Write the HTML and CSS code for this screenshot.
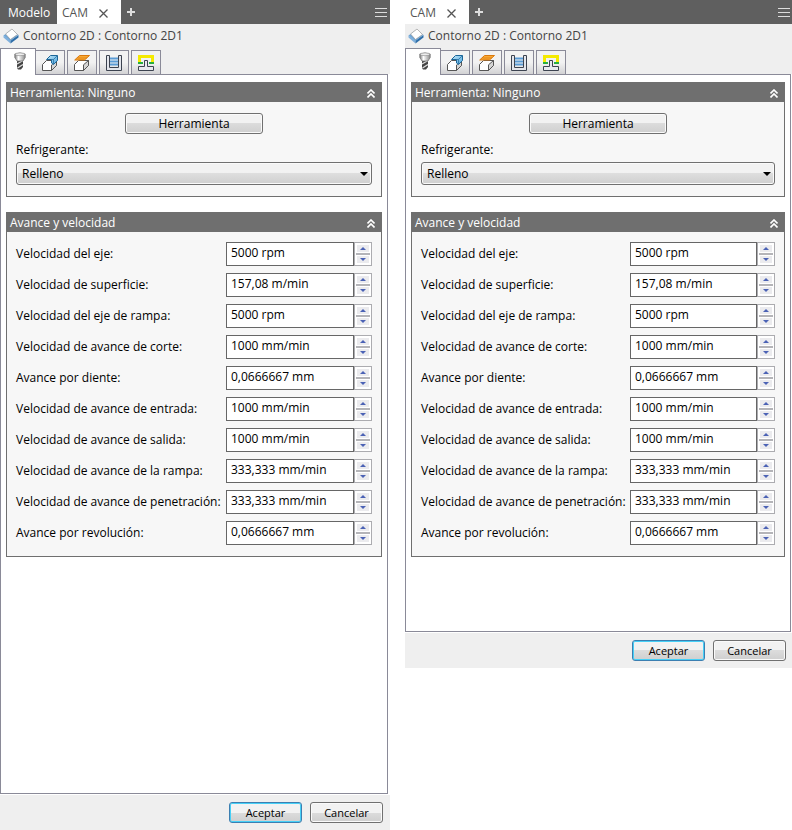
FILE: index.html
```
<!DOCTYPE html>
<html lang="es">
<head>
  <meta charset="UTF-8">
  <title>Contorno 2D</title>
  <link rel="stylesheet" href="styles.css">
</head>
<body>
  <svg width="0" height="0" class="sprites" aria-hidden="true">
    <defs>
      <linearGradient id="metal" x1="0" x2="1" y1="0" y2="0">
        <stop offset="0" stop-color="#777"/>
        <stop offset="0.35" stop-color="#fff"/>
        <stop offset="1" stop-color="#888"/>
      </linearGradient>
      <linearGradient id="azul" x1="0" x2="1" y1="0" y2="1">
        <stop offset="0" stop-color="#c4e8f8"/>
        <stop offset="1" stop-color="#4aa3dc"/>
      </linearGradient>
    </defs>
    <symbol id="i-contorno" viewBox="0 0 16 16">
      <path d="M0.5 7.5L7.5 12.5V15.5L0.5 9.5Z" fill="#7fb0dc"/>
      <path d="M15.5 7L7.5 12.5V15.5L15.5 9.5Z" fill="#2f6ea8"/>
      <path d="M0.5 7.5L8 2L15.5 7L7.5 13Z" fill="#6ea6d8"/>
      <path d="M2.5 6L9 1L14.5 6.5L7.5 11.5Z" fill="#fff" stroke="#999" stroke-width="0.7"/>
    </symbol>
    <symbol id="i-herramienta" viewBox="0 0 16 18">
      <path d="M5 8H11V15L9 17.5H6L5 16Z" fill="#444"/>
      <path d="M5 12L11 8.5M5.5 16L11 12.5" stroke="#ddd" stroke-width="1.4"/>
      <path d="M2.8 2Q8 0 13.2 2V5.5L11 9H5L2.8 5.5Z" fill="url(#metal)" stroke="#777" stroke-width="0.8"/>
      <ellipse cx="8" cy="2.3" rx="4.6" ry="1.4" fill="#eee" stroke="#888" stroke-width="0.6"/>
    </symbol>
    <symbol id="i-geometria" viewBox="0 0 16 16">
      <path d="M0.5 9.5L4.5 5.5H14.5V10.5L9.5 15.5H0.5Z" fill="#fff" stroke="#555" stroke-linejoin="round"/>
      <path d="M9.5 10V15.5L14.5 10.5V5.5Z" fill="#d5d5d5" stroke="#555" stroke-linejoin="round"/>
      <path d="M4.5 4.5L8.5 0.5H15.5V5.5L11.5 9.5L9.5 8V4.5Z" fill="url(#azul)" stroke="#1c6698" stroke-linejoin="round"/>
      <path d="M9.5 4.5H11.5L15.2 0.8M11.5 4.5V9" fill="none" stroke="#1c6698" stroke-width="0.7"/>
    </symbol>
    <symbol id="i-alturas" viewBox="0 0 16 16">
      <path d="M0.5 9.5L4.5 5.5H14.5V10.5L9.5 15.5H0.5Z" fill="#fff" stroke="#555" stroke-linejoin="round"/>
      <path d="M9.5 9.8V15.5L14.5 10.5V5.5Z" fill="#d5d5d5" stroke="#555" stroke-linejoin="round"/>
      <path d="M0.7 5L5.5 0.5H15.5L10.5 5Z" fill="#f9a832" stroke="#d9780e" stroke-linejoin="round"/>
      <path d="M3.5 3H13" stroke="#d9780e" stroke-width="0.7"/>
    </symbol>
    <symbol id="i-pasadas" viewBox="0 0 16 16">
      <path d="M4 3.5H12M4 6.5H12M4 9.5H12" stroke="#5a9bd5" stroke-width="2"/>
      <path d="M0.5 0.5H3.5V12.5H12.5V0.5H15.5V15.5H0.5Z" fill="#e4e6ec" stroke="#3c4350"/>
    </symbol>
    <symbol id="i-vinculacion" viewBox="0 0 16 16">
      <path d="M0 8H5M11 8H16" stroke="#27ae3f" stroke-width="2"/>
      <path d="M1.5 7V1.5H14.5V7" fill="none" stroke="#f5ea00" stroke-width="3"/>
      <path d="M6.500 5.500H9.500V11.500H15.500V15.500H0.500V11.500H6.500Z" fill="#e8e9ee" stroke="#3c4350"/>
    </symbol>
    <symbol id="i-plegar" viewBox="0 0 8 9">
      <path d="M0.500 4.500L4 1L7.500 4.500M0.500 8.500L4 5L7.500 8.500" fill="none" stroke="#fff" stroke-width="1.600"/>
    </symbol>
    <symbol id="i-cerrar" viewBox="0 0 9 9">
      <path d="M0.500 0.500L8.500 8.500M8.500 0.500L0.500 8.500" stroke="#555" stroke-width="1.300"/>
    </symbol>
    <symbol id="i-mas" viewBox="0 0 8 8">
      <path d="M4 0V8M0 4H8" stroke="#ddd" stroke-width="2"/>
    </symbol>
    <symbol id="i-menu" viewBox="0 0 12 9">
      <path d="M0 0.500H12M0 4.500H12M0 8.500H12" stroke="#ddd"/>
    </symbol>
  </svg>

  <main class="paneles">
    <section class="panel panel-alto">
      <div class="barra">
        <button class="pestana">Modelo</button>
        <div class="pestana activa">CAM
          <button class="icono" aria-label="Cerrar"><svg width="9" height="9"><use href="#i-cerrar"/></svg></button>
        </div>
        <button class="icono mas" aria-label="Añadir"><svg width="8" height="8"><use href="#i-mas"/></svg></button>
        <button class="icono menu" aria-label="Menú"><svg width="12" height="9"><use href="#i-menu"/></svg></button>
      </div>
      <h1 class="titulo"><svg width="16" height="16"><use href="#i-contorno"/></svg>Contorno 2D : Contorno 2D1</h1>
      <nav class="fichas">
        <button class="ficha actual" aria-label="Herramienta"><svg width="16" height="18"><use href="#i-herramienta"/></svg></button>
        <button class="ficha" aria-label="Geometría"><svg width="16" height="16"><use href="#i-geometria"/></svg></button>
        <button class="ficha" aria-label="Alturas"><svg width="16" height="16"><use href="#i-alturas"/></svg></button>
        <button class="ficha" aria-label="Pasadas"><svg width="16" height="16"><use href="#i-pasadas"/></svg></button>
        <button class="ficha" aria-label="Vinculación"><svg width="16" height="16"><use href="#i-vinculacion"/></svg></button>
      </nav>
      <div class="pagina">
        <section class="grupo">
          <h2>Herramienta: Ninguno <button class="icono" aria-label="Plegar"><svg width="8" height="9"><use href="#i-plegar"/></svg></button></h2>
          <div class="cuerpo">
            <button class="boton elegir">Herramienta</button>
            <label class="refrigerante" for="refrigerante1">Refrigerante:</label>
            <div class="lista"><select id="refrigerante1"><option>Relleno</option></select></div>
          </div>
        </section>
        <section class="grupo">
          <h2>Avance y velocidad <button class="icono" aria-label="Plegar"><svg width="8" height="9"><use href="#i-plegar"/></svg></button></h2>
          <div class="cuerpo campos"></div>
        </section>
      </div>
      <footer class="pie">
        <button class="boton aceptar">Aceptar</button>
        <button class="boton">Cancelar</button>
      </footer>
    </section>

    <section class="panel">
      <div class="barra">
        <div class="pestana activa">CAM
          <button class="icono" aria-label="Cerrar"><svg width="9" height="9"><use href="#i-cerrar"/></svg></button>
        </div>
        <button class="icono mas" aria-label="Añadir"><svg width="8" height="8"><use href="#i-mas"/></svg></button>
        <button class="icono menu" aria-label="Menú"><svg width="12" height="9"><use href="#i-menu"/></svg></button>
      </div>
      <h1 class="titulo"><svg width="16" height="16"><use href="#i-contorno"/></svg>Contorno 2D : Contorno 2D1</h1>
      <nav class="fichas">
        <button class="ficha actual" aria-label="Herramienta"><svg width="16" height="18"><use href="#i-herramienta"/></svg></button>
        <button class="ficha" aria-label="Geometría"><svg width="16" height="16"><use href="#i-geometria"/></svg></button>
        <button class="ficha" aria-label="Alturas"><svg width="16" height="16"><use href="#i-alturas"/></svg></button>
        <button class="ficha" aria-label="Pasadas"><svg width="16" height="16"><use href="#i-pasadas"/></svg></button>
        <button class="ficha" aria-label="Vinculación"><svg width="16" height="16"><use href="#i-vinculacion"/></svg></button>
      </nav>
      <div class="pagina">
        <section class="grupo">
          <h2>Herramienta: Ninguno <button class="icono" aria-label="Plegar"><svg width="8" height="9"><use href="#i-plegar"/></svg></button></h2>
          <div class="cuerpo">
            <button class="boton elegir">Herramienta</button>
            <label class="refrigerante" for="refrigerante2">Refrigerante:</label>
            <div class="lista"><select id="refrigerante2"><option>Relleno</option></select></div>
          </div>
        </section>
        <section class="grupo">
          <h2>Avance y velocidad <button class="icono" aria-label="Plegar"><svg width="8" height="9"><use href="#i-plegar"/></svg></button></h2>
          <div class="cuerpo campos"></div>
        </section>
      </div>
      <footer class="pie">
        <button class="boton aceptar">Aceptar</button>
        <button class="boton">Cancelar</button>
      </footer>
    </section>
  </main>

  <script src="script.js"></script>
</body>
</html>
```
FILE: styles.css
```
* {
  box-sizing: border-box;
}
body {
  margin: 0;
  background: #fff;
  color: #000;
  font-family: "Open Sans", Tahoma, sans-serif;
  font-size: 12px;
  line-height: 16px;
}
button, input, select {
  font: inherit;
  color: inherit;
  margin: 0;
}
svg {
  display: block;
}
h1, h2 {
  margin: 0;
  font-size: 12px;
  font-weight: normal;
}
.sprites {
  position: absolute;
}
.paneles {
  display: grid;
  grid-template-columns: 390fr 387fr;
  gap: 15px;
  align-items: start;
}
.panel {
  display: flex;
  flex-direction: column;
  background: linear-gradient(#efefef, #efefef) top / 100% 74px no-repeat;
}
.panel-alto {
  min-height: 100vh;
}
.icono {
  padding: 0;
  border: none;
  background: none;
}

/* barra superior */
.barra {
  display: flex;
  align-items: center;
  height: 24px;
  padding-right: 3px;
  background: #5f5f5f;
}
.panel:last-child .barra {
  padding-right: 2px;
}
.pestana {
  width: 57px;
  height: 24px;
  padding: 2px 0 0 8px;
  border: none;
  background: none;
  color: #fff;
  text-align: left;
}
.pestana.activa {
  display: flex;
  align-items: center;
  justify-content: space-between;
  width: 64px;
  padding: 2px 13px 0 5px;
  background: #fff;
  color: #555;
}
.mas {
  margin-left: 6px;
}
.menu {
  margin-left: auto;
}

.titulo {
  display: flex;
  align-items: center;
  gap: 4px;
  height: 24px;
  padding-left: 3px;
  color: #444;
}

/* fichas de la operación */
.fichas {
  display: flex;
  align-items: flex-end;
  gap: 2px;
  height: 27px;
  margin-bottom: -1px;
  position: relative;
}
.ficha {
  display: flex;
  align-items: center;
  justify-content: center;
  width: 30px;
  height: 25px;
  padding: 0;
  border: 1px solid #8a8a98;
  background: linear-gradient(#f2f2f2 50%, #d2d2d4);
}
.ficha.actual {
  width: 36px;
  height: 27px;
  margin-right: -3px;
  padding-left: 4px;
  padding-bottom: 2px;
  border-bottom: none;
  background: #fff;
  z-index: 1;
}

.pagina {
  flex: 1;
  margin: 0 2px 0 0;
  padding: 7px 5px 74px;
  border: 1px solid #8a8a98;
  background: #fff;
}
.panel:last-child .pagina {
  margin-right: 1px;
}
.grupo {
  margin-bottom: 15px;
}
.grupo:last-child {
  margin-bottom: 0;
}
.grupo h2 {
  display: flex;
  align-items: center;
  justify-content: space-between;
  height: 20px;
  padding: 2px 7px 0 4px;
  background: #6f6f6f;
  color: #fff;
}
.cuerpo {
  padding: 11px 9px;
  border: 1px solid #6f6f6f;
  border-top: none;
  background: #f7f7f7;
}

.boton {
  width: 73px;
  height: 21px;
  padding: 0;
  border: 1px solid #707070;
  border-radius: 3px;
  background: linear-gradient(#f2f2f2 50%, #dcdcdc 50%, #cfcfcf);
  box-shadow: inset 0 0 0 1px #fafafa;
  font-size: 11px;
}
.aceptar {
  border-color: #3c7fb1;
  box-shadow: inset 0 0 0 1px #46d0f7;
}
.elegir {
  display: block;
  width: 138px;
  margin: 0 auto;
  font-size: 12px;
}
.refrigerante {
  display: block;
  margin: 8px 0 4px;
}
.lista {
  position: relative;
}
.lista select {
  display: block;
  appearance: none;
  width: 100%;
  height: 23px;
  padding: 0 5px;
  border: 1px solid #707070;
  border-radius: 3px;
  background: linear-gradient(#f2f2f2 45%, #dedede 50%, #cfcfcf);
  box-shadow: inset 0 0 0 1px #fafafa;
}
.lista::after {
  content: "";
  position: absolute;
  top: 10px;
  right: 4px;
  border: 4px solid transparent;
  border-top-color: #000;
  border-bottom: none;
}

/* filas de avance y velocidad */
.campos {
  display: grid;
  gap: 7px;
  padding-top: 10px;
}
.campo {
  display: grid;
  grid-template-columns: 1fr 146px;
  align-items: center;
  white-space: nowrap;
}
.panel:last-child .campo {
  grid-template-columns: 1fr 145px;
}
.valor {
  display: flex;
}
.valor input {
  flex: 1;
  min-width: 0;
  height: 24px;
  padding: 0 4px 4px;
  border: 1px solid #666;
  border-radius: 0;
  background: #fff;
}
.giro {
  display: grid;
  gap: 2px;
  width: 18px;
  padding: 1px;
  border: 1px solid #acacb0;
  background: #b4b4b8;
  box-shadow: inset 0 0 0 1px #fff;
}
.giro button {
  display: flex;
  align-items: center;
  justify-content: center;
  padding: 0;
  border: 1px solid #fff;
  background: #ebebee;
}
.giro button::before {
  content: "";
  border: 3px solid transparent;
  border-top: none;
  border-bottom-color: #4b62b5;
}
.giro .bajar::before {
  border-top: 3px solid #4b62b5;
  border-bottom: none;
}

.pie {
  display: flex;
  justify-content: flex-end;
  gap: 8px;
  margin-top: 1px;
  padding: 7px 7px;
  background: #efefef;
}
.panel:last-child .pie {
  padding-right: 6px;
}
```
FILE: script.js
```
const campos = [
  ['Velocidad del eje:', '5000 rpm'],
  ['Velocidad de superficie:', '157,08 m/min'],
  ['Velocidad del eje de rampa:', '5000 rpm'],
  ['Velocidad de avance de corte:', '1000 mm/min'],
  ['Avance por diente:', '0,0666667 mm'],
  ['Velocidad de avance de entrada:', '1000 mm/min'],
  ['Velocidad de avance de salida:', '1000 mm/min'],
  ['Velocidad de avance de la rampa:', '333,333 mm/min'],
  ['Velocidad de avance de penetración:', '333,333 mm/min'],
  ['Avance por revolución:', '0,0666667 mm']
];

document.querySelectorAll('.campos').forEach((caja, panel) => {
  caja.innerHTML = campos.map(([nombre, valor], i) => {
    const id = `campo${panel}-${i}`;
    return `
      <div class="campo">
        <label for="${id}">${nombre}</label>
        <div class="valor">
          <input type="text" id="${id}" value="${valor}">
          <div class="giro">
            <button class="subir" aria-label="Aumentar"></button>
            <button class="bajar" aria-label="Reducir"></button>
          </div>
        </div>
      </div>`;
  }).join('');
});
```
